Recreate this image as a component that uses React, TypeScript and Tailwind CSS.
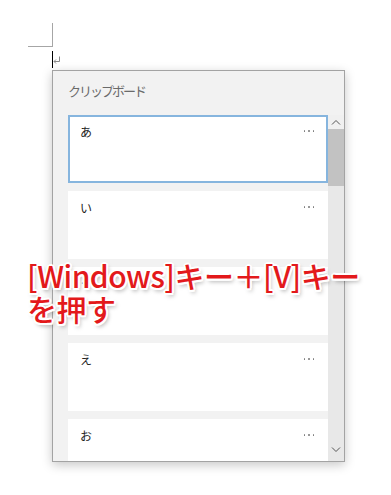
import React from 'react';

const jp = { fontFamily: '"Noto Sans CJK JP", "Noto Sans", sans-serif' };

const items = ['あ', 'い', 'う', 'え', 'お'];

function Dots() {
  return (
    <div className="mt-[13px] mr-[12px] flex gap-[3px]">
      <span className="h-[1.5px] w-[1.5px] rounded-full bg-[#777]" />
      <span className="h-[1.5px] w-[1.5px] rounded-full bg-[#777]" />
      <span className="h-[1.5px] w-[1.5px] rounded-full bg-[#777]" />
    </div>
  );
}

function ClipItem({ text, selected }: { text: string; selected?: boolean }) {
  return (
    <div
      className={
        selected
          ? 'flex h-[68px] shrink-0 justify-between border-2 border-[#86b5de] bg-white'
          : 'flex h-[68px] shrink-0 justify-between border-2 border-white bg-white'
      }
    >
      <span className="ml-[10px] mt-[6px] text-[12px] leading-[18px] text-[#222]">{text}</span>
      <Dots />
    </div>
  );
}

export default function App() {
  return (
    <div className="relative h-[495px] w-[391px] overflow-hidden bg-white" style={jp}>
      {/* page corner mark */}
      <div className="ml-[28px] mt-[23px] h-[24px] w-[25px] border-b border-r border-[#a6a6a6]" />
      <div className="ml-[52px] mt-[4px] flex h-[17px] items-start">
        <div className="h-[17px] w-px bg-black" />
        <svg width="8" height="9" viewBox="0 0 8 9" className="mt-[5px]">
          <path d="M6.5 0.5 V5.5 H1 M3 3.5 L1 5.5 L3 7.5" fill="none" stroke="#8a8a8a" strokeWidth="1" />
        </svg>
      </div>

      {/* clipboard panel */}
      <div className="ml-[52px] mt-[2px] flex h-[392px] w-[293px] flex-col border border-[#a3a3a3] bg-[#f2f2f2] shadow-[0_3px_10px_rgba(0,0,0,0.22)]">
        <div className="h-[44px] pl-[15px] pt-[11px] text-[13px] leading-[18px] tracking-[-2px] text-[#6a6a6a]">
          クリップボード
        </div>
        <div className="flex min-h-0 flex-1">
          <div className="flex min-w-0 flex-1 flex-col gap-[8px] overflow-hidden pl-[15px]">
            <ClipItem text="あ" selected />
            {items.slice(1).map((t) => (
              <ClipItem key={t} text={t} />
            ))}
          </div>
          <div className="flex w-[16px] flex-col bg-[#e8e8e8]">
            <div className="flex h-[14px] items-center justify-center bg-[#f0f0f0]">
              <svg width="10" height="6" viewBox="0 0 10 6">
                <path d="M1 5.5 L5 1.5 L9 5.5" fill="none" stroke="#555" strokeWidth="1" />
              </svg>
            </div>
            <div className="h-[57px] bg-[#c2c2c2]" />
            <div className="flex-1" />
            <div className="flex h-[14px] items-start justify-center pb-[4px]">
              <svg width="10" height="6" viewBox="0 0 10 6">
                <path d="M1 0.5 L5 4.5 L9 0.5" fill="none" stroke="#555" strokeWidth="1" />
              </svg>
            </div>
          </div>
        </div>
      </div>

      {/* red caption overlay */}
      <div className="absolute left-[27px] top-[259px] text-[30px] leading-[33px] font-medium text-[#e3191b] tracking-[-0.5px] [text-shadow:-2px_0_0_#fff,2px_0_0_#fff,0_-2px_0_#fff,0_2px_0_#fff,-1.5px_-1.5px_0_#fff,1.5px_1.5px_0_#fff,-1.5px_1.5px_0_#fff,1.5px_-1.5px_0_#fff,2px_3px_4px_rgba(0,0,0,0.35)]">
        <div className="whitespace-nowrap">[Windows]キー＋[V]キー</div>
        <div>を押す</div>
      </div>
    </div>
  );
}
